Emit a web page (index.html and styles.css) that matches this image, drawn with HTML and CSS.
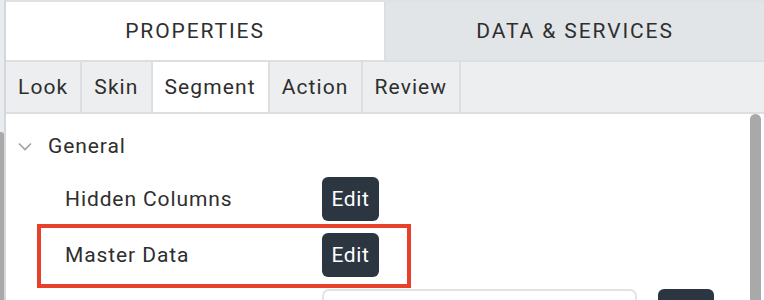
FILE: index.html
```html
<!DOCTYPE html>
<html>
<head>
<meta charset="utf-8">
<link rel="stylesheet" href="styles.css">
</head>
<body>
<div class="app">
  <div class="left-strip"><div class="left-thumb"></div></div>
  <div class="panel">
    <div class="tabs">
      <div class="tab active">PROPERTIES</div>
      <div class="tab">DATA &amp; SERVICES</div>
    </div>
    <div class="subtabs">
      <div class="subtab">Look</div>
      <div class="subtab">Skin</div>
      <div class="subtab active">Segment</div>
      <div class="subtab">Action</div>
      <div class="subtab">Review</div>
    </div>
    <div class="content">
      <div class="body">
        <div class="section-head">
          <svg class="chevron" width="14" height="9" viewBox="0 0 14 9"><path d="M1 1.5 L7 7.5 L13 1.5" fill="none" stroke="#a0a0a0" stroke-width="1.6"/></svg>
          <span>General</span>
        </div>
        <div class="prop">
          <span class="label">Hidden Columns</span>
          <button class="btn">Edit</button>
        </div>
        <div class="prop highlight">
          <span class="label">Master Data</span>
          <button class="btn">Edit</button>
        </div>
        <div class="prop">
          <span class="label"></span>
          <div class="input"></div>
          <button class="btn small"></button>
        </div>
      </div>
      <div class="scroll"><div class="thumb"></div></div>
    </div>
  </div>
</div>
</body>
</html>
```
FILE: styles.css
```css
*, *::before, *::after { box-sizing: border-box; }
html, body { margin: 0; padding: 0; }
body {
  width: 764px;
  height: 300px;
  overflow: hidden;
  background: #fff;
  font-family: Roboto, "Liberation Sans", sans-serif;
  color: #2e2e2e;
}
.app { display: flex; height: 300px; overflow: hidden; }
.left-strip {
  width: 6px;
  background: #e9ecef;
  border-right: 2px solid #d3d7db;
  padding-top: 132px;
  overflow: hidden;
}
.left-thumb {
  width: 4px;
  height: 168px;
  background: #a9a9a9;
  border-radius: 0 3px 0 0;
}
.panel { flex: 1; display: flex; flex-direction: column; min-width: 0; overflow: hidden; }
.tabs {
  display: flex;
  height: 62px;
  flex: none;
  border-top: 2px solid #dfe2e5;
  border-bottom: 2px solid #dcdfe2;
}
.tab {
  flex: 1;
  display: flex;
  align-items: center;
  justify-content: center;
  font-size: 21px;
  letter-spacing: 1.9px;
  background: #e2e5e8;
  color: #2e2e2e;
}
.tab.active { background: #fff; border-right: 2px solid #dcdfe2; }
.subtabs {
  display: flex;
  height: 52px;
  flex: none;
  background: #eceef0;
  border-bottom: 2px solid #dcdfe2;
}
.subtab {
  display: flex;
  align-items: center;
  padding: 0 12px;
  font-size: 21px;
  border-right: 2px solid #dcdfe2;
  letter-spacing: 1.1px;
}
.subtab.active { background: #fff; }
.content { flex: 1; display: flex; min-height: 0; overflow: hidden; }
.body { flex: 1; }
.section-head {
  height: 63px;
  display: flex;
  align-items: center;
  padding-left: 12px;
  gap: 16px;
  font-size: 21px;
  letter-spacing: 0.9px;
}
.chevron { display: block; margin-top: 1px; }
.prop {
  height: 44px;
  margin-bottom: 12px;
  display: flex;
  align-items: center;
  padding-left: 59px;
  font-size: 21px;
  letter-spacing: 0.9px;
  position: relative;
}
.label { width: 257px; flex: none; }
.btn {
  width: 57px;
  height: 44px;
  border: none;
  border-radius: 6px;
  background: #2b3641;
  color: #fff;
  font-family: Roboto, "Liberation Sans", sans-serif;
  font-size: 21px;
  letter-spacing: 0.6px;
  padding: 0;
  flex: none;
}
.btn.small { width: 56px; margin-left: 21px; }
.input {
  width: 315px;
  height: 44px;
  border: 2px solid #e3e3e3;
  border-radius: 7px;
  flex: none;
}
.highlight::after {
  content: "";
  position: absolute;
  left: 31px;
  top: -9px;
  width: 374px;
  height: 64px;
  border: 4px solid #e8412b;
  pointer-events: none;
}
.scroll { width: 14px; padding: 0 2px 0 0; }
.thumb {
  width: 11px;
  height: 200px;
  background: #a9a9a9;
  border-radius: 6px 6px 0 0;
}
```
